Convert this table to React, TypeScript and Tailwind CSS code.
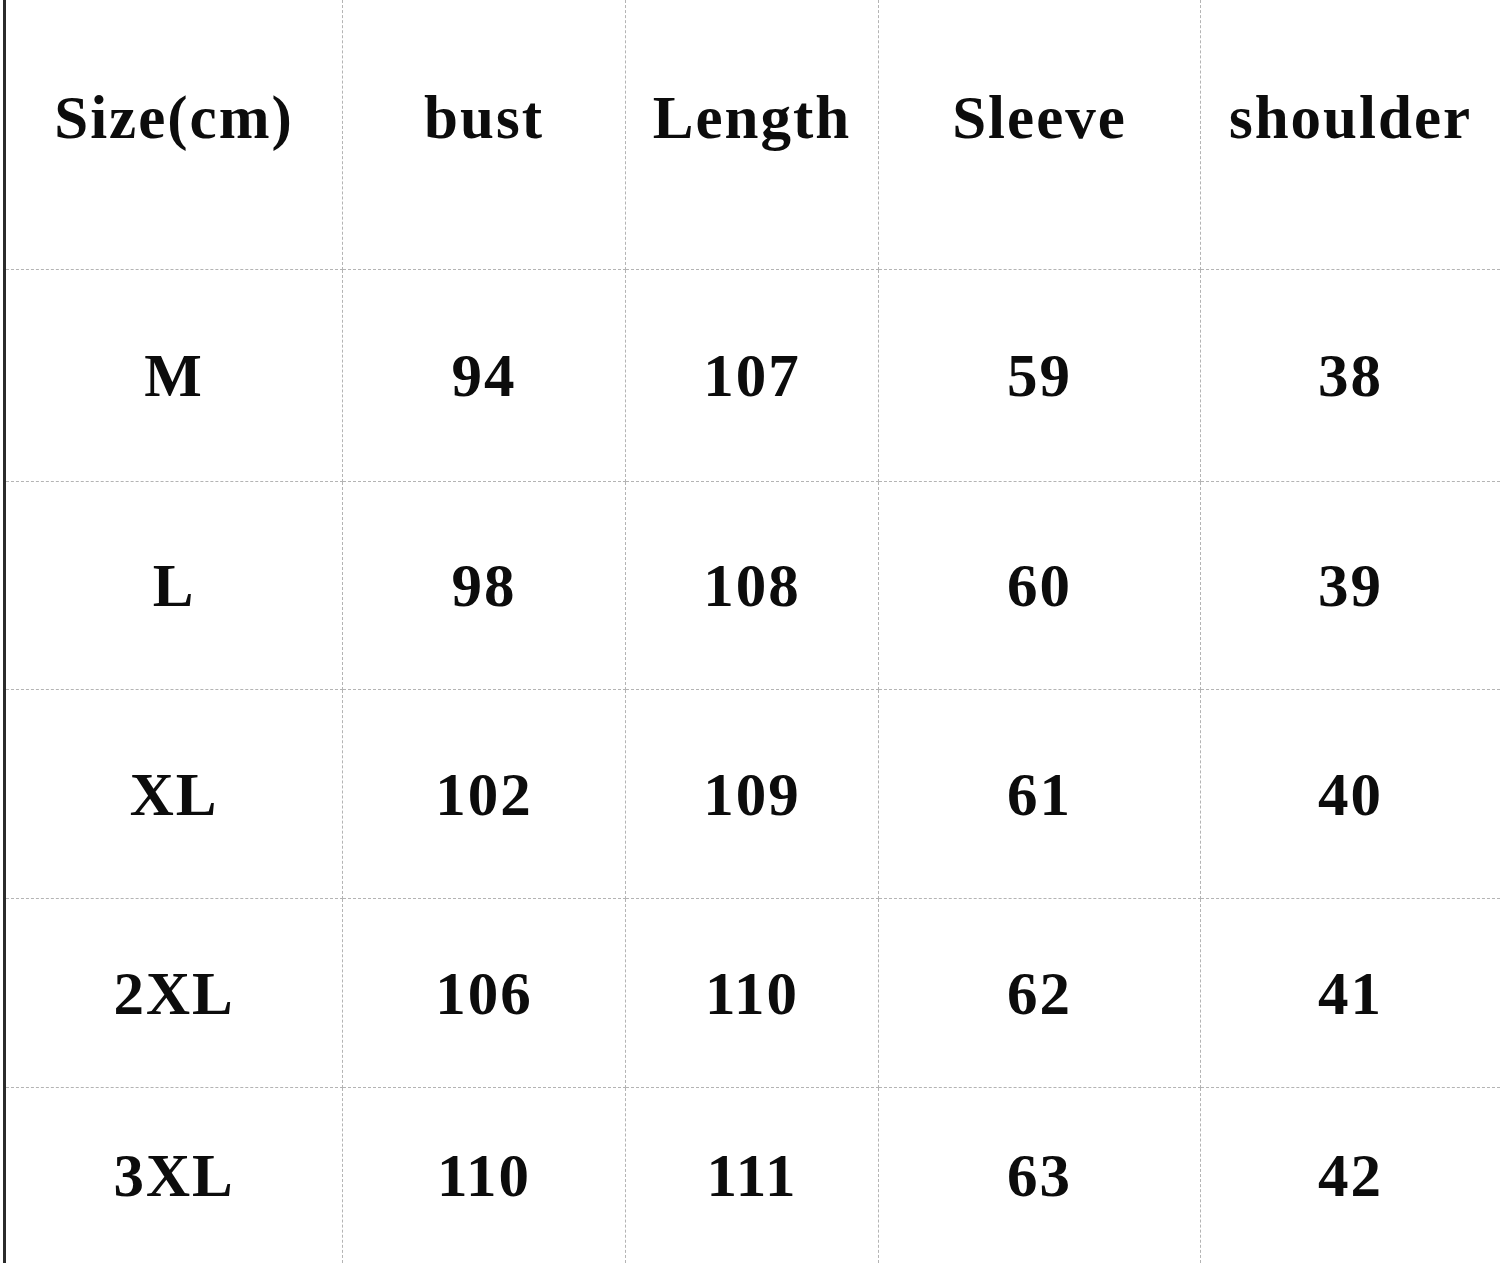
const headers = ['Size(cm)', 'bust', 'Length', 'Sleeve', 'shoulder'];

const rows = [
  ['M', '94', '107', '59', '38'],
  ['L', '98', '108', '60', '39'],
  ['XL', '102', '109', '61', '40'],
  ['2XL', '106', '110', '62', '41'],
  ['3XL', '110', '111', '63', '42'],
];

const rowHeights = ['h-[212px]', 'h-[208px]', 'h-[209px]', 'h-[189px]', 'h-[175px]'];
const colWidths = ['w-[337px]', 'w-[283px]', 'w-[253px]', 'w-[322px]', 'w-[299px]'];

function Cell({ text, col, last, height, header }: { text: string; col: number; last: boolean; height: string; header?: boolean }) {
  return (
    <div
      className={`${colWidths[col]} ${height} flex items-center justify-center border-dashed border-[#b4b4b4] ${
        col < 4 ? 'border-r' : ''
      } ${last ? '' : 'border-b'} ${header ? 'pb-[34px]' : ''}`}
    >
      <span className="text-[61px] font-bold leading-none tracking-[2px] text-[#0c0c0c]">{text}</span>
    </div>
  );
}

export default function App() {
  return (
    <div
      className="h-[1267px] w-[1500px] bg-white overflow-hidden"
      style={{ fontFamily: '"Liberation Serif", "Times New Roman", serif' }}
    >
      <div className="ml-[3px] h-[1263px] border-l-[3px] border-[#2b2b2b] flex flex-col">
        <div className="flex">
          {headers.map((h, i) => (
            <Cell key={h} text={h} col={i} last={false} height="h-[270px]" header />
          ))}
        </div>
        {rows.map((r, ri) => (
          <div key={r[0]} className="flex">
            {r.map((v, i) => (
              <Cell key={i} text={v} col={i} last={ri === rows.length - 1} height={rowHeights[ri]} />
            ))}
          </div>
        ))}
      </div>
    </div>
  );
}
